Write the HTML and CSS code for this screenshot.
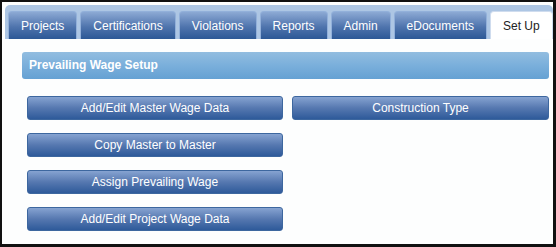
FILE: index.html
```html
<!DOCTYPE html>
<html lang="en">

<head>
    <meta charset="utf-8" />
    <title>Prevailing Wage Setup</title>
    <link rel="stylesheet" href="styles.css">
</head>

<body>
    <div class="frame">
        <!-- main navigation tabs -->
        <ul class="tabs">
            <li class="tab">Projects</li>
            <li class="tab">Certifications</li>
            <li class="tab">Violations</li>
            <li class="tab">Reports</li>
            <li class="tab">Admin</li>
            <li class="tab">eDocuments</li>
            <li class="tab active">Set Up</li>
        </ul>

        <div class="content">
            <div class="section-title">Prevailing Wage Setup</div>

            <div class="actions">
                <button type="button" class="action">Add/Edit Master Wage Data</button>
                <button type="button" class="action">Construction Type</button>
                <button type="button" class="action">Copy Master to Master</button>
                <span></span>
                <button type="button" class="action">Assign Prevailing Wage</button>
                <span></span>
                <button type="button" class="action">Add/Edit Project Wage Data</button>
            </div>
        </div>
    </div>
</body>

</html>
```

FILE: styles.css
```css
* {
    font-family: "Liberation Sans", Arial, sans-serif;
    box-sizing: border-box;
}

body {
    margin: 0;
}

.frame {
    width: 556px;
    height: 247px;
    overflow: hidden;
    border-style: solid;
    border-color: #111;
    border-width: 2px 3px 3px 2px;
    background: #fdfefe;
}

.tabs {
    list-style: none;
    margin: 3px 0 0 3px;
    padding: 6px 0 0 3px;
    height: 34px;
    display: flex;
    align-items: flex-end;
    gap: 3px;
    background: #adc6e4;
    border-radius: 5px 5px 0 0;
}

.tab {
    flex-shrink: 0;
    white-space: nowrap;
    height: 28px;
    padding: 0 12px;
    line-height: 28px;
    font-size: 12px;
    color: #fff;
    border: 1px solid #92b0da;
    border-bottom: none;
    border-radius: 4px 4px 0 0;
    background: linear-gradient(#8ca9d4 0%, #4f74ad 55%, #2c5896 100%);
}

.tab.active {
    color: #222;
    background: #fff;
    border-color: #cfdcee;
}

.content {
    padding: 13px 4px 0 20px;
}

.section-title {
    height: 27px;
    line-height: 27px;
    padding-left: 7px;
    font-size: 12px;
    font-weight: bold;
    color: #fff;
    border-radius: 3px;
    background: linear-gradient(#92bde0 0%, #7aafdb 50%, #65a1d3 100%);
}

.actions {
    display: grid;
    grid-template-columns: 256px 257px;
    column-gap: 9px;
    row-gap: 13px;
    margin: 17px 0 0 5px;
}

.action {
    height: 24px;
    padding: 0;
    font-size: 12px;
    color: #fff;
    border: 1px solid #3d679f;
    border-radius: 3px;
    background: linear-gradient(#86a3d1 0%, #5678b0 50%, #2e5a9a 100%);
    cursor: pointer;
}
```
